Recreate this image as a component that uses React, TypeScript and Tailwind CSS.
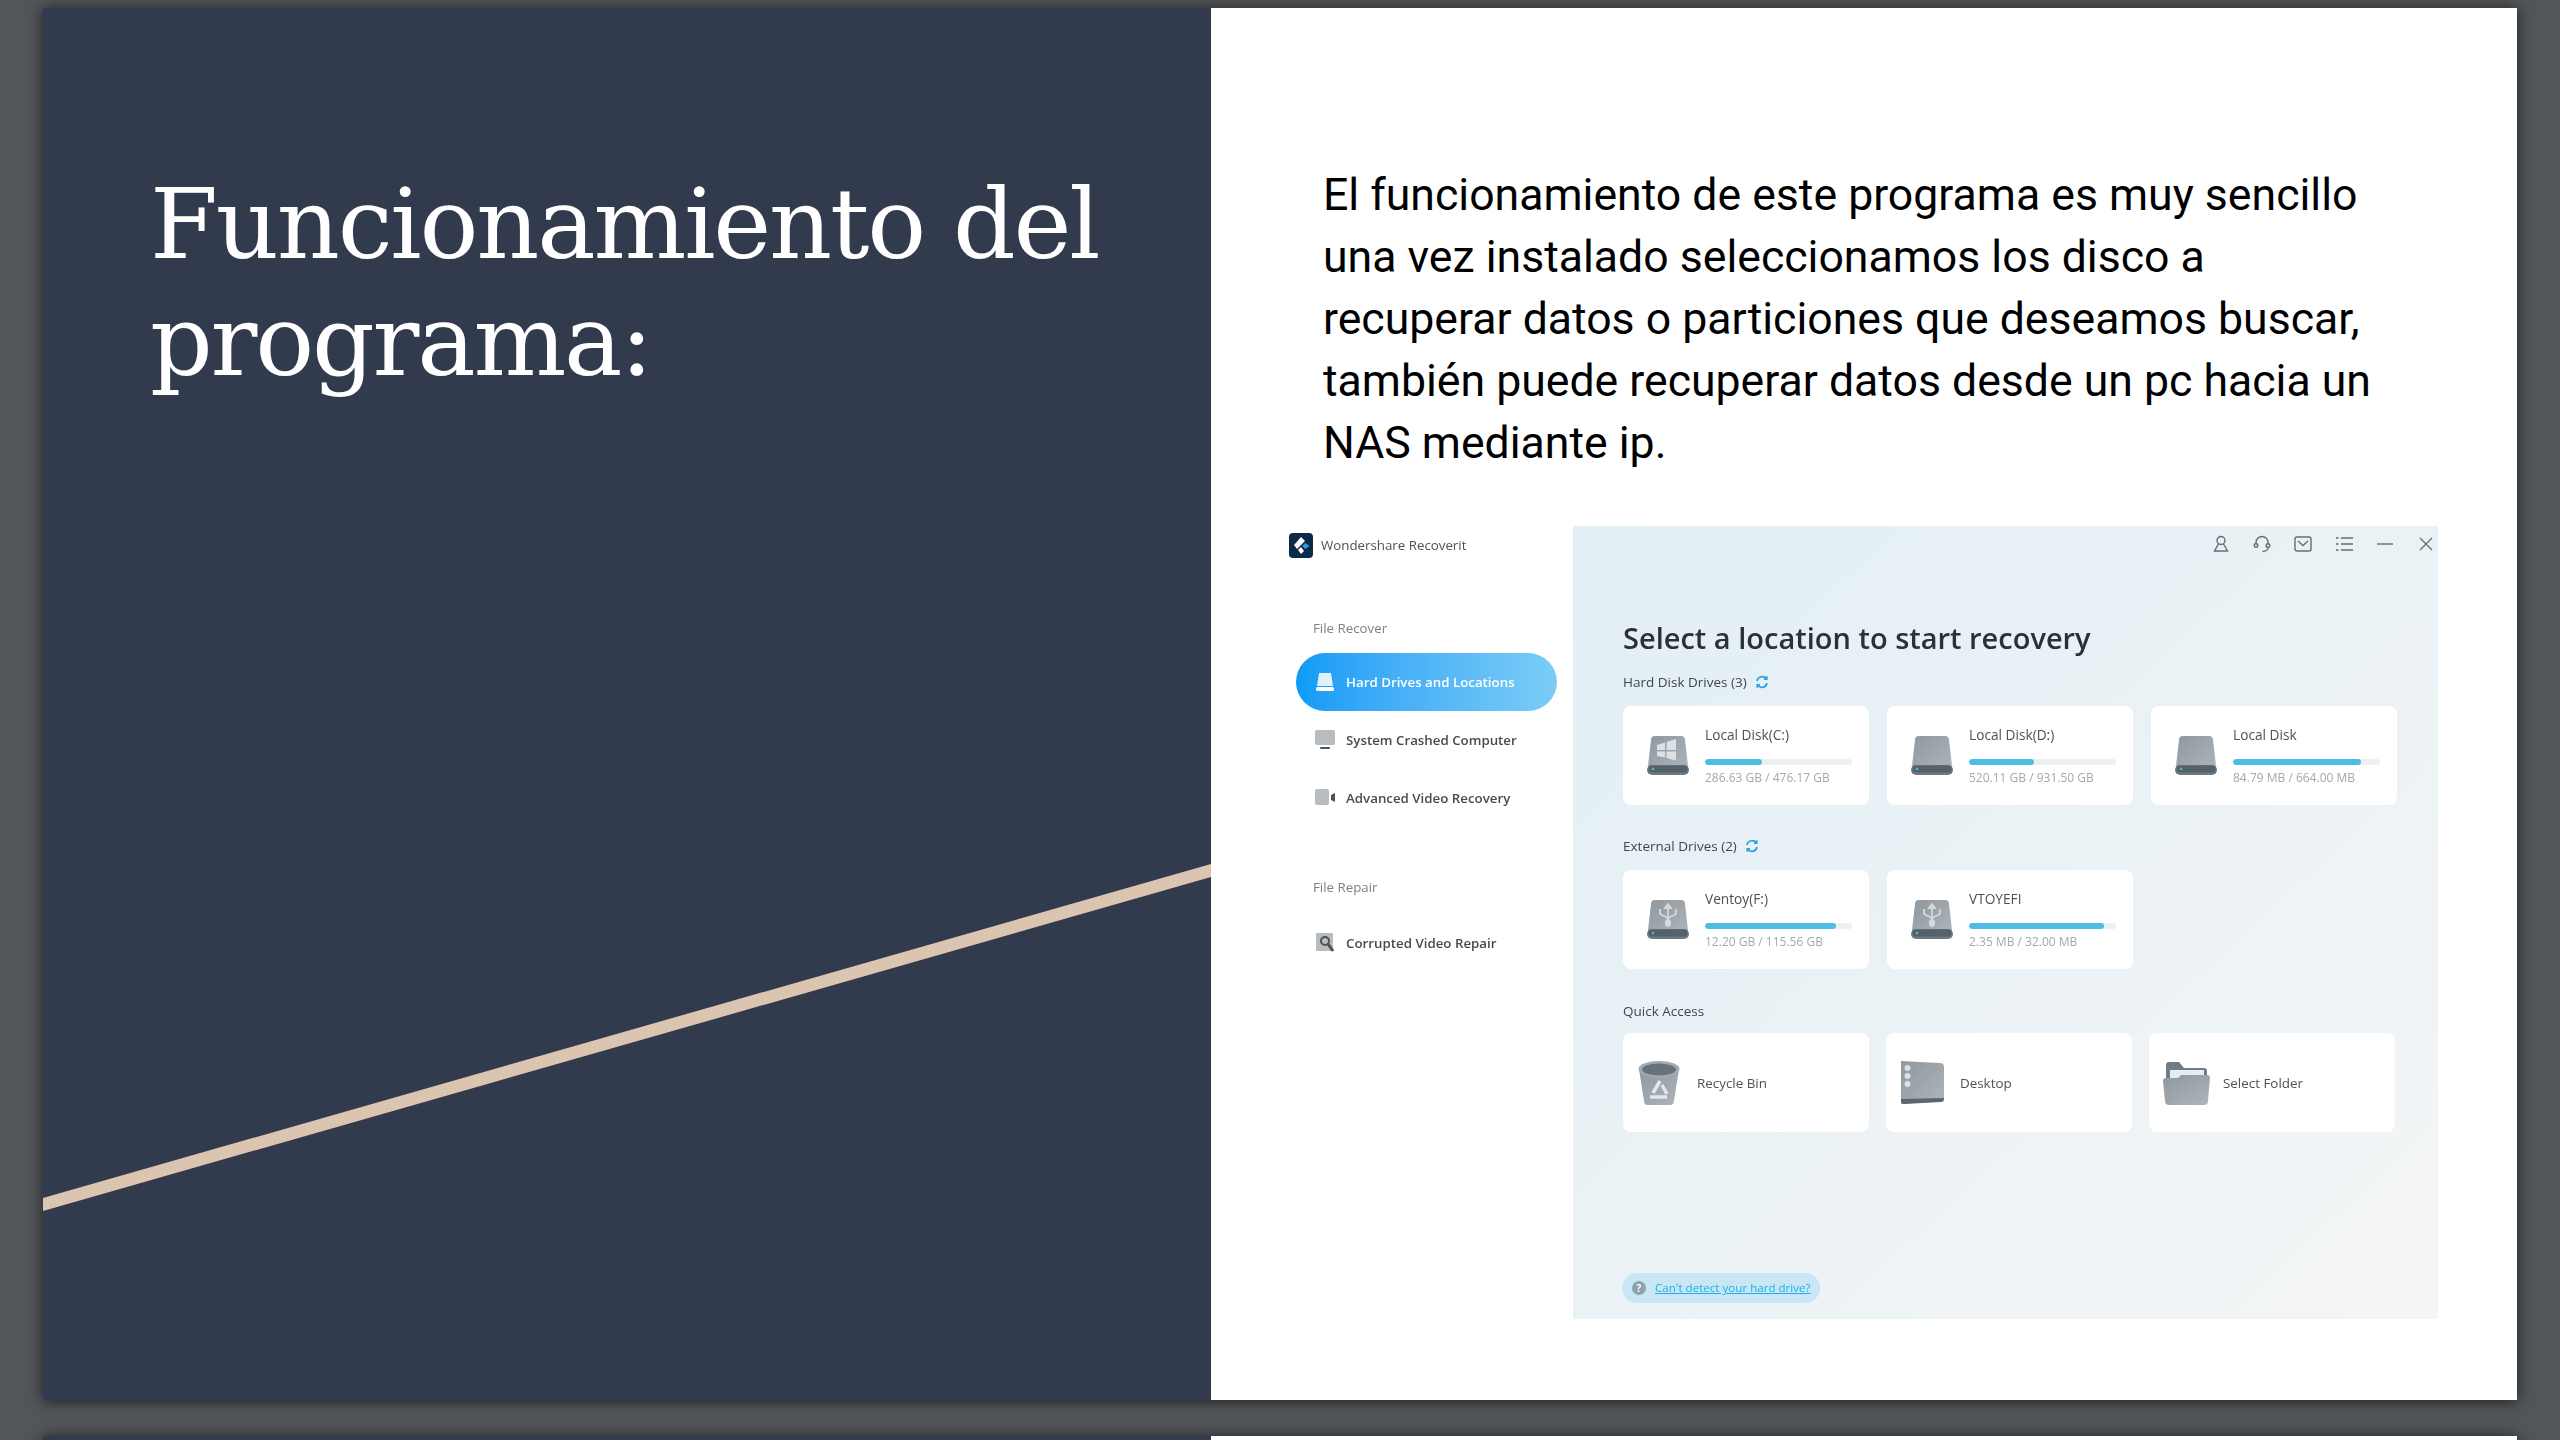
import React from 'react';

const appFont = "font-['Open_Sans','Noto_Sans',sans-serif]";

const hardDrives = [
  { name: 'Local Disk(C:)', usage: '286.63 GB / 476.17 GB', pct: 39, kind: 'win' },
  { name: 'Local Disk(D:)', usage: '520.11 GB / 931.50 GB', pct: 44, kind: 'plain' },
  { name: 'Local Disk', usage: '84.79 MB / 664.00 MB', pct: 87, kind: 'plain' },
];

const externalDrives = [
  { name: 'Ventoy(F:)', usage: '12.20 GB / 115.56 GB', pct: 89, kind: 'usb' },
  { name: 'VTOYEFI', usage: '2.35 MB / 32.00 MB', pct: 92, kind: 'usb' },
];

function GreyGradient({ id }: { id: string }) {
  return (
    <defs>
      <linearGradient id={id} x1="0" y1="0" x2="1" y2="1">
        <stop offset="0" stopColor="#8f989f" />
        <stop offset="1" stopColor="#aeb5ba" />
      </linearGradient>
    </defs>
  );
}

function DriveIcon({ kind }: { kind: string }) {
  return (
    <svg viewBox="0 0 42 40" className="w-[42px] h-[40px] shrink-0 mt-[30px]">
      <GreyGradient id={`drive-${kind}`} />
      <path d="M8 0h26a4 4 0 0 1 4 4l3 26a5 5 0 0 1-5 5H6a5 5 0 0 1-5-5L4 4a4 4 0 0 1 4-4z" fill={`url(#drive-${kind})`} />
      <rect x="0" y="29" width="42" height="10" rx="5" fill="#6c7882" />
      <rect x="1.500" y="29.500" width="39" height="7" rx="3.500" fill="#55626c" />
      <circle cx="6" cy="33" r="1.200" fill="#35d0b5" />
      {kind === 'win' && (
        <g fill="#dde1e4">
          <path d="M10 9l8-2.500V14h-8z" />
          <path d="M19.500 6l9.500-3v11h-9.500z" />
          <path d="M10 15.500h8v6l-8-1.500z" />
          <path d="M19.500 15.500H29v9l-9.500-2.500z" />
        </g>
      )}
      {kind === 'usb' && (
        <g fill="none" stroke="#d3d8db" strokeWidth="1.800">
          <path d="M21 5v17" />
          <path d="M18 8l3-4 3 4z" fill="#d3d8db" />
          <path d="M13 9v5l8 4 8-4V9" />
          <ellipse cx="21" cy="23" rx="2.200" ry="3.200" fill="#d3d8db" />
        </g>
      )}
    </svg>
  );
}

function DriveCard({ name, usage, pct, kind }: { name: string; usage: string; pct: number; kind: string }) {
  return (
    <div className="w-[246px] h-[99px] shrink-0 bg-white rounded-[8px] flex items-start pl-[24px] gap-[16px]">
      <DriveIcon kind={kind} />
      <div className="w-[147px] pt-[19px]">
        <div className="h-[20px] leading-[20px] text-[13.700px] text-[#4b5258] whitespace-nowrap">{name}</div>
        <div className="h-[6px] mt-[14px] rounded-full bg-[#edf0f1] overflow-hidden">
          <div className="h-full rounded-full bg-[#4dbde6]" style={{ width: `${pct}%` }} />
        </div>
        <div className="h-[18px] mt-[4px] leading-[18px] text-[12px] text-[#a3a9ae] whitespace-nowrap">{usage}</div>
      </div>
    </div>
  );
}

function Refresh() {
  return (
    <svg viewBox="0 0 14 14" className="w-[14px] h-[14px]" fill="none" stroke="#2b9fe6" strokeWidth="1.600">
      <path d="M2 6a5.200 5.200 0 0 1 9.300-2.300" />
      <path d="M12 8a5.200 5.200 0 0 1-9.300 2.300" />
      <path d="M11.800 1.300v2.800H9" />
      <path d="M2.200 12.700V9.900H5" />
    </svg>
  );
}

function SectionLabel({ text, refresh }: { text: string; refresh?: boolean }) {
  return (
    <div className="h-[20px] flex items-center gap-[8px] text-[13.500px] text-[#3f464c]">
      <span>{text}</span>
      {refresh && <Refresh />}
    </div>
  );
}

function TopIcons() {
  const cls = 'w-[18px] h-[18px]';
  const stroke = { fill: 'none', stroke: '#666d73', strokeWidth: 1.400 };
  return (
    <div className="h-[36px] flex items-center justify-end gap-[23px] pr-[3px]">
      <svg viewBox="0 0 18 18" className={cls} {...stroke}>
        <circle cx="9" cy="5.500" r="4" />
        <path d="M6.500 9L2.500 16h13l-4-7" />
      </svg>
      <svg viewBox="0 0 18 18" className={cls} {...stroke}>
        <path d="M3 9V7.500a6 6 0 0 1 12 0V9" />
        <circle cx="3" cy="10.500" r="1.800" />
        <circle cx="15" cy="10.500" r="1.800" />
        <path d="M15 13c0 2-2.500 3.500-5.500 3.500" />
      </svg>
      <svg viewBox="0 0 18 18" className={cls} {...stroke}>
        <rect x="1" y="2" width="16" height="14" rx="2" />
        <path d="M4 6l5 4.500L14 6" />
      </svg>
      <svg viewBox="0 0 18 18" className={cls} {...stroke}>
        <path d="M6 3h12M6 9h12M6 15h12" />
        <path d="M1 3h2.500M1 9h2.500M1 15h2.500" />
      </svg>
      <svg viewBox="0 0 18 18" className={cls} {...stroke}>
        <path d="M1 9h16" />
      </svg>
      <svg viewBox="0 0 18 18" className={cls} {...stroke}>
        <path d="M3 3l12 12M15 3L3 15" />
      </svg>
    </div>
  );
}

function NavItem({ label, icon, active }: { label: string; icon: React.ReactNode; active?: boolean }) {
  return (
    <div
      className={
        active
          ? 'ml-[13px] w-[261px] h-[58px] rounded-full bg-gradient-to-r from-[#0a9bf6] to-[#7bcdf5] flex items-center pl-[19px] gap-[11px] text-white'
          : 'ml-[13px] w-[261px] h-[58px] flex items-center pl-[19px] gap-[11px] text-[#454c52]'
      }
    >
      <span className="w-[20px] h-[20px] shrink-0">{icon}</span>
      <span className="pt-px text-[13.300px] font-semibold whitespace-nowrap">{label}</span>
    </div>
  );
}

function Screenshot() {
  return (
    <div className={`mt-[52px] ml-[72px] w-[1155px] h-[793px] flex blur-[0.3px] ${appFont}`}>
      <div className="w-[290px] shrink-0">
        <div className="h-[39px] ml-[6px] flex items-center gap-[8px]">
          <svg viewBox="0 0 24 25" className="w-[24px] h-[25px]">
            <rect width="24" height="25" rx="4" fill="#0b2a47" />
            <path d="M12 4l4 4-8 8-3-4z" fill="#ffffff" />
            <path d="M13 13l3.500-3 4 3-4 3z" fill="#2d9be0" />
            <path d="M9 17l3-3 3 4-3 3z" fill="#ffffff" />
          </svg>
          <span className="text-[13.300px] text-[#4b5258] whitespace-nowrap">Wondershare Recoverit</span>
        </div>
        <div className="mt-[53px] ml-[30px] h-[20px] leading-[20px] text-[13.300px] text-[#7b8187]">File Recover</div>
        <div className="mt-[15px]">
          <NavItem
            active
            label="Hard Drives and Locations"
            icon={
              <svg viewBox="0 0 20 20" className="w-full h-full">
                <path d="M4 1h12l2 13H2z" fill="#dff1fc" />
                <rect x="1" y="15" width="18" height="4" rx="1.500" fill="#ffffff" />
              </svg>
            }
          />
          <NavItem
            label="System Crashed Computer"
            icon={
              <svg viewBox="0 0 20 20" className="w-full h-full">
                <rect x="0" y="0" width="20" height="15" rx="2" fill="#b7bcc1" />
                <rect x="5" y="17" width="10" height="2" rx="1" fill="#4c5359" />
              </svg>
            }
          />
          <NavItem
            label="Advanced Video Recovery"
            icon={
              <svg viewBox="0 0 20 20" className="w-full h-full">
                <rect x="0" y="1" width="14" height="16" rx="2" fill="#b7bcc1" />
                <path d="M20 5v9l-4-2V7z" fill="#4c5359" />
              </svg>
            }
          />
        </div>
        <div className="mt-[50px] ml-[30px] h-[20px] leading-[20px] text-[13.300px] text-[#7b8187]">File Repair</div>
        <div className="mt-[17px]">
          <NavItem
            label="Corrupted Video Repair"
            icon={
              <svg viewBox="0 0 20 20" className="w-full h-full">
                <rect x="1" y="0" width="17" height="18" rx="1" fill="#b7bcc1" />
                <circle cx="10" cy="8" r="4" fill="none" stroke="#4c5359" strokeWidth="2" />
                <path d="M13 11l5 7" stroke="#4c5359" strokeWidth="3" />
              </svg>
            }
          />
        </div>
      </div>

      <div className="w-[865px] shrink-0 bg-gradient-to-br from-[#e2eff5] to-[#f4f5f6] pl-[50px]">
        <TopIcons />
        <div className="mt-[58px] h-[36px] leading-[36px] text-[29px] font-semibold text-[#2c3136] whitespace-nowrap">
          Select a location to start recovery
        </div>
        <div className="mt-[16px]">
          <SectionLabel text="Hard Disk Drives (3)" refresh />
        </div>
        <div className="mt-[14px] flex gap-[18px]">
          {hardDrives.map(d => (
            <DriveCard key={d.name} {...d} />
          ))}
        </div>
        <div className="mt-[31px]">
          <SectionLabel text="External Drives (2)" refresh />
        </div>
        <div className="mt-[14px] flex gap-[18px]">
          {externalDrives.map(d => (
            <DriveCard key={d.name} {...d} />
          ))}
        </div>
        <div className="mt-[32px]">
          <SectionLabel text="Quick Access" />
        </div>
        <div className="mt-[12px] flex gap-[17px]">
          <div className="w-[246px] h-[99px] shrink-0 bg-white rounded-[8px] flex items-center pl-[15px] gap-[17px]">
            <svg viewBox="0 0 42 44" className="w-[42px] h-[44px] shrink-0">
              <GreyGradient id="bin" />
              <path d="M1 8h40l-5 32a4 4 0 0 1-4 4H10a4 4 0 0 1-4-4z" fill="url(#bin)" />
              <ellipse cx="21" cy="8" rx="20.500" ry="8" fill="#a3abb1" />
              <ellipse cx="21" cy="8.500" rx="17" ry="6" fill="#66737d" />
              <path d="M22 20l-7 12" fill="none" stroke="#e4e7e9" strokeWidth="3.500" />
              <path d="M24 24l5 9" fill="none" stroke="#e4e7e9" strokeWidth="3.500" />
              <path d="M12 36h17" fill="none" stroke="#e4e7e9" strokeWidth="3.500" />
            </svg>
            <span className="pt-px text-[13.400px] text-[#4b5258]">Recycle Bin</span>
          </div>
          <div className="w-[246px] h-[99px] shrink-0 bg-white rounded-[8px] flex items-center pl-[15px] gap-[16px]">
            <svg viewBox="0 0 43 43" className="w-[43px] h-[43px] shrink-0">
              <GreyGradient id="desk" />
              <path d="M0 0l39 2a4 4 0 0 1 4 4v31a3 3 0 0 1-3 3L0 43z" fill="url(#desk)" />
              <path d="M0 38l43-1v1a3 3 0 0 1-3 3L3 43a3 3 0 0 1-3-3z" fill="#5a6771" />
              <circle cx="6.500" cy="7" r="3" fill="#dde1e4" />
              <circle cx="6.500" cy="15" r="3" fill="#dde1e4" />
              <circle cx="6.500" cy="23" r="3" fill="#dde1e4" />
            </svg>
            <span className="pt-px text-[13.400px] text-[#4b5258]">Desktop</span>
          </div>
          <div className="w-[246px] h-[99px] shrink-0 bg-white rounded-[8px] flex items-center pl-[14px] gap-[13px]">
            <svg viewBox="0 0 47 44" className="w-[47px] h-[44px] shrink-0">
              <GreyGradient id="folder" />
              <path d="M3 4a3 3 0 0 1 3-3h10l5 6h20a3 3 0 0 1 3 3v12H3z" fill="#707c86" />
              <rect x="7" y="9" width="34" height="16" fill="#e9ecee" />
              <path d="M0 20a3 3 0 0 1 3-3h12l3-3h26a3 3 0 0 1 3 3l-2 23a4 4 0 0 1-4 4H6a4 4 0 0 1-4-4z" fill="url(#folder)" />
            </svg>
            <span className="pt-px text-[13.400px] text-[#4b5258]">Select Folder</span>
          </div>
        </div>
        <div className="mt-[141px] -ml-px w-[198px] h-[30px] rounded-full bg-[#c8e6f3] flex items-center pl-[10px] gap-[9px]">
          <span className="w-[14px] h-[14px] rounded-full bg-[#8fa3ad] text-white text-[10px] font-bold leading-[14px] text-center">?</span>
          <span className="text-[11.600px] text-[#1cb0ea] underline whitespace-nowrap">Can't detect your hard drive?</span>
        </div>
      </div>
    </div>
  );
}

export default function App() {
  return (
    <div className="h-screen overflow-hidden bg-[#525659] pt-[8px] pl-[43px] flex flex-col gap-[36px]">
      <div className="w-[2474px] h-[1392px] shrink-0 flex shadow-[0_1px_14px_rgba(0,0,0,0.65)]">
        <div className="relative w-[1168px] shrink-0 bg-[#323b4e] pl-[107px] pt-[158px]">
          <h1 className="font-['DejaVu_Serif',serif] text-[98px] leading-[117px] tracking-[-2.200px] text-white">
            Funcionamiento del
            <br />
            programa:
          </h1>
          <svg viewBox="0 0 1168 1392" className="absolute inset-0 w-full h-full">
            <polygon points="0,1190 1168,856 1168,869 0,1203" fill="#dcc5b0" />
          </svg>
        </div>
        <div className="flex-1 bg-white">
          <p className="ml-[112px] pt-[156px] w-[1060px] font-['Roboto',sans-serif] text-[44.600px] leading-[62px] text-black">
            El funcionamiento de este programa es muy sencillo una vez instalado seleccionamos los disco a recuperar datos o particiones que deseamos buscar, también puede recuperar datos desde un pc hacia un NAS mediante ip.
          </p>
          <Screenshot />
        </div>
      </div>
      <div className="w-[2474px] h-[1392px] shrink-0 flex shadow-[0_1px_14px_rgba(0,0,0,0.65)]">
        <div className="w-[1168px] shrink-0 bg-[#323b4e]" />
        <div className="flex-1 bg-white" />
      </div>
    </div>
  );
}
